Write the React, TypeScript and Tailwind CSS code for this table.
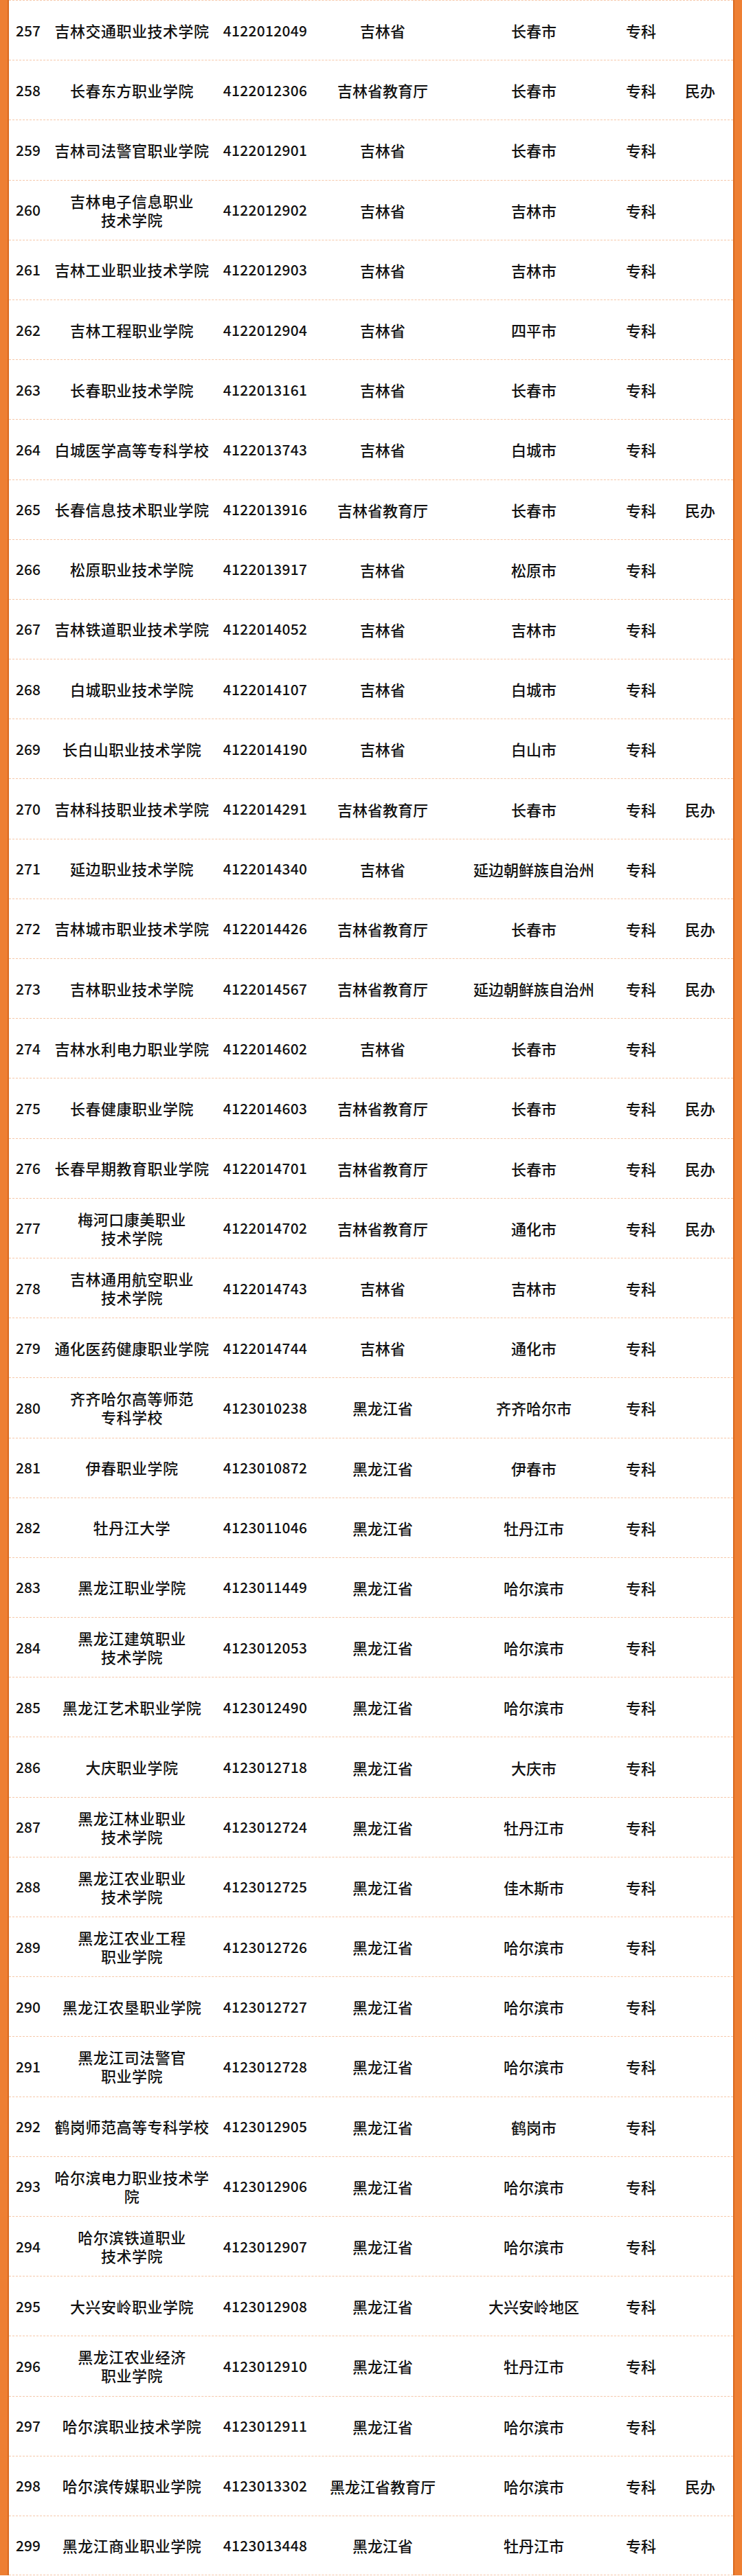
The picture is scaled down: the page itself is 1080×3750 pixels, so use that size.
import React from "react";

type Row = [number, string, string, string, string, string, string?];

const rows: Row[] = [
  [257, "吉林交通职业技术学院", "4122012049", "吉林省", "长春市", "专科"],
  [258, "长春东方职业学院", "4122012306", "吉林省教育厅", "长春市", "专科", "民办"],
  [259, "吉林司法警官职业学院", "4122012901", "吉林省", "长春市", "专科"],
  [260, "吉林电子信息职业|技术学院", "4122012902", "吉林省", "吉林市", "专科"],
  [261, "吉林工业职业技术学院", "4122012903", "吉林省", "吉林市", "专科"],
  [262, "吉林工程职业学院", "4122012904", "吉林省", "四平市", "专科"],
  [263, "长春职业技术学院", "4122013161", "吉林省", "长春市", "专科"],
  [264, "白城医学高等专科学校", "4122013743", "吉林省", "白城市", "专科"],
  [265, "长春信息技术职业学院", "4122013916", "吉林省教育厅", "长春市", "专科", "民办"],
  [266, "松原职业技术学院", "4122013917", "吉林省", "松原市", "专科"],
  [267, "吉林铁道职业技术学院", "4122014052", "吉林省", "吉林市", "专科"],
  [268, "白城职业技术学院", "4122014107", "吉林省", "白城市", "专科"],
  [269, "长白山职业技术学院", "4122014190", "吉林省", "白山市", "专科"],
  [270, "吉林科技职业技术学院", "4122014291", "吉林省教育厅", "长春市", "专科", "民办"],
  [271, "延边职业技术学院", "4122014340", "吉林省", "延边朝鲜族自治州", "专科"],
  [272, "吉林城市职业技术学院", "4122014426", "吉林省教育厅", "长春市", "专科", "民办"],
  [273, "吉林职业技术学院", "4122014567", "吉林省教育厅", "延边朝鲜族自治州", "专科", "民办"],
  [274, "吉林水利电力职业学院", "4122014602", "吉林省", "长春市", "专科"],
  [275, "长春健康职业学院", "4122014603", "吉林省教育厅", "长春市", "专科", "民办"],
  [276, "长春早期教育职业学院", "4122014701", "吉林省教育厅", "长春市", "专科", "民办"],
  [277, "梅河口康美职业|技术学院", "4122014702", "吉林省教育厅", "通化市", "专科", "民办"],
  [278, "吉林通用航空职业|技术学院", "4122014743", "吉林省", "吉林市", "专科"],
  [279, "通化医药健康职业学院", "4122014744", "吉林省", "通化市", "专科"],
  [280, "齐齐哈尔高等师范|专科学校", "4123010238", "黑龙江省", "齐齐哈尔市", "专科"],
  [281, "伊春职业学院", "4123010872", "黑龙江省", "伊春市", "专科"],
  [282, "牡丹江大学", "4123011046", "黑龙江省", "牡丹江市", "专科"],
  [283, "黑龙江职业学院", "4123011449", "黑龙江省", "哈尔滨市", "专科"],
  [284, "黑龙江建筑职业|技术学院", "4123012053", "黑龙江省", "哈尔滨市", "专科"],
  [285, "黑龙江艺术职业学院", "4123012490", "黑龙江省", "哈尔滨市", "专科"],
  [286, "大庆职业学院", "4123012718", "黑龙江省", "大庆市", "专科"],
  [287, "黑龙江林业职业|技术学院", "4123012724", "黑龙江省", "牡丹江市", "专科"],
  [288, "黑龙江农业职业|技术学院", "4123012725", "黑龙江省", "佳木斯市", "专科"],
  [289, "黑龙江农业工程|职业学院", "4123012726", "黑龙江省", "哈尔滨市", "专科"],
  [290, "黑龙江农垦职业学院", "4123012727", "黑龙江省", "哈尔滨市", "专科"],
  [291, "黑龙江司法警官|职业学院", "4123012728", "黑龙江省", "哈尔滨市", "专科"],
  [292, "鹤岗师范高等专科学校", "4123012905", "黑龙江省", "鹤岗市", "专科"],
  [293, "哈尔滨电力职业技术学|院", "4123012906", "黑龙江省", "哈尔滨市", "专科"],
  [294, "哈尔滨铁道职业|技术学院", "4123012907", "黑龙江省", "哈尔滨市", "专科"],
  [295, "大兴安岭职业学院", "4123012908", "黑龙江省", "大兴安岭地区", "专科"],
  [296, "黑龙江农业经济|职业学院", "4123012910", "黑龙江省", "牡丹江市", "专科"],
  [297, "哈尔滨职业技术学院", "4123012911", "黑龙江省", "哈尔滨市", "专科"],
  [298, "哈尔滨传媒职业学院", "4123013302", "黑龙江省教育厅", "哈尔滨市", "专科", "民办"],
  [299, "黑龙江商业职业学院", "4123013448", "黑龙江省", "牡丹江市", "专科"],
];

export default function App() {
  return (
    <div
      className="flex w-[1080px] bg-white text-[#111111]"
      style={{ fontFamily: '"Noto Sans CJK SC", "Noto Sans", sans-serif' }}
    >
      <div className="w-[13px] shrink-0 bg-[#ee7f33] border-r-2 border-[#d9691f]" />
      <div className="flex-1 flex flex-col">
        {rows.map((r, i) => {
          const name = r[1].split("|");
          const last = i === rows.length - 1;
          return (
            <div
              key={r[0]}
              className={
                "grid grid-cols-[54px_250px_138px_204px_236px_76px_96px] items-center h-[87.2px] border-t border-dashed border-[#f6c7a8] text-[22px] font-medium " +
                (last ? "border-b" : "")
              }
            >
              <div className="pl-[10px] text-[21px] leading-none">{r[0]}</div>
              <div className="text-center leading-[27px] tracking-[0.5px]">
                {name.map((n, k) => (
                  <div key={k}>{n}</div>
                ))}
              </div>
              <div className="text-center text-[21px] tracking-[0.3px] leading-none">{r[2]}</div>
              <div className="text-center leading-none">{r[3]}</div>
              <div className="text-center leading-none">{r[4]}</div>
              <div className="text-center leading-none">{r[5]}</div>
              <div className="text-center leading-none">{r[6] ?? ""}</div>
            </div>
          );
        })}
      </div>
      <div className="w-[13px] shrink-0 bg-[#ee7f33] border-l-2 border-[#d9691f]" />
    </div>
  );
}
